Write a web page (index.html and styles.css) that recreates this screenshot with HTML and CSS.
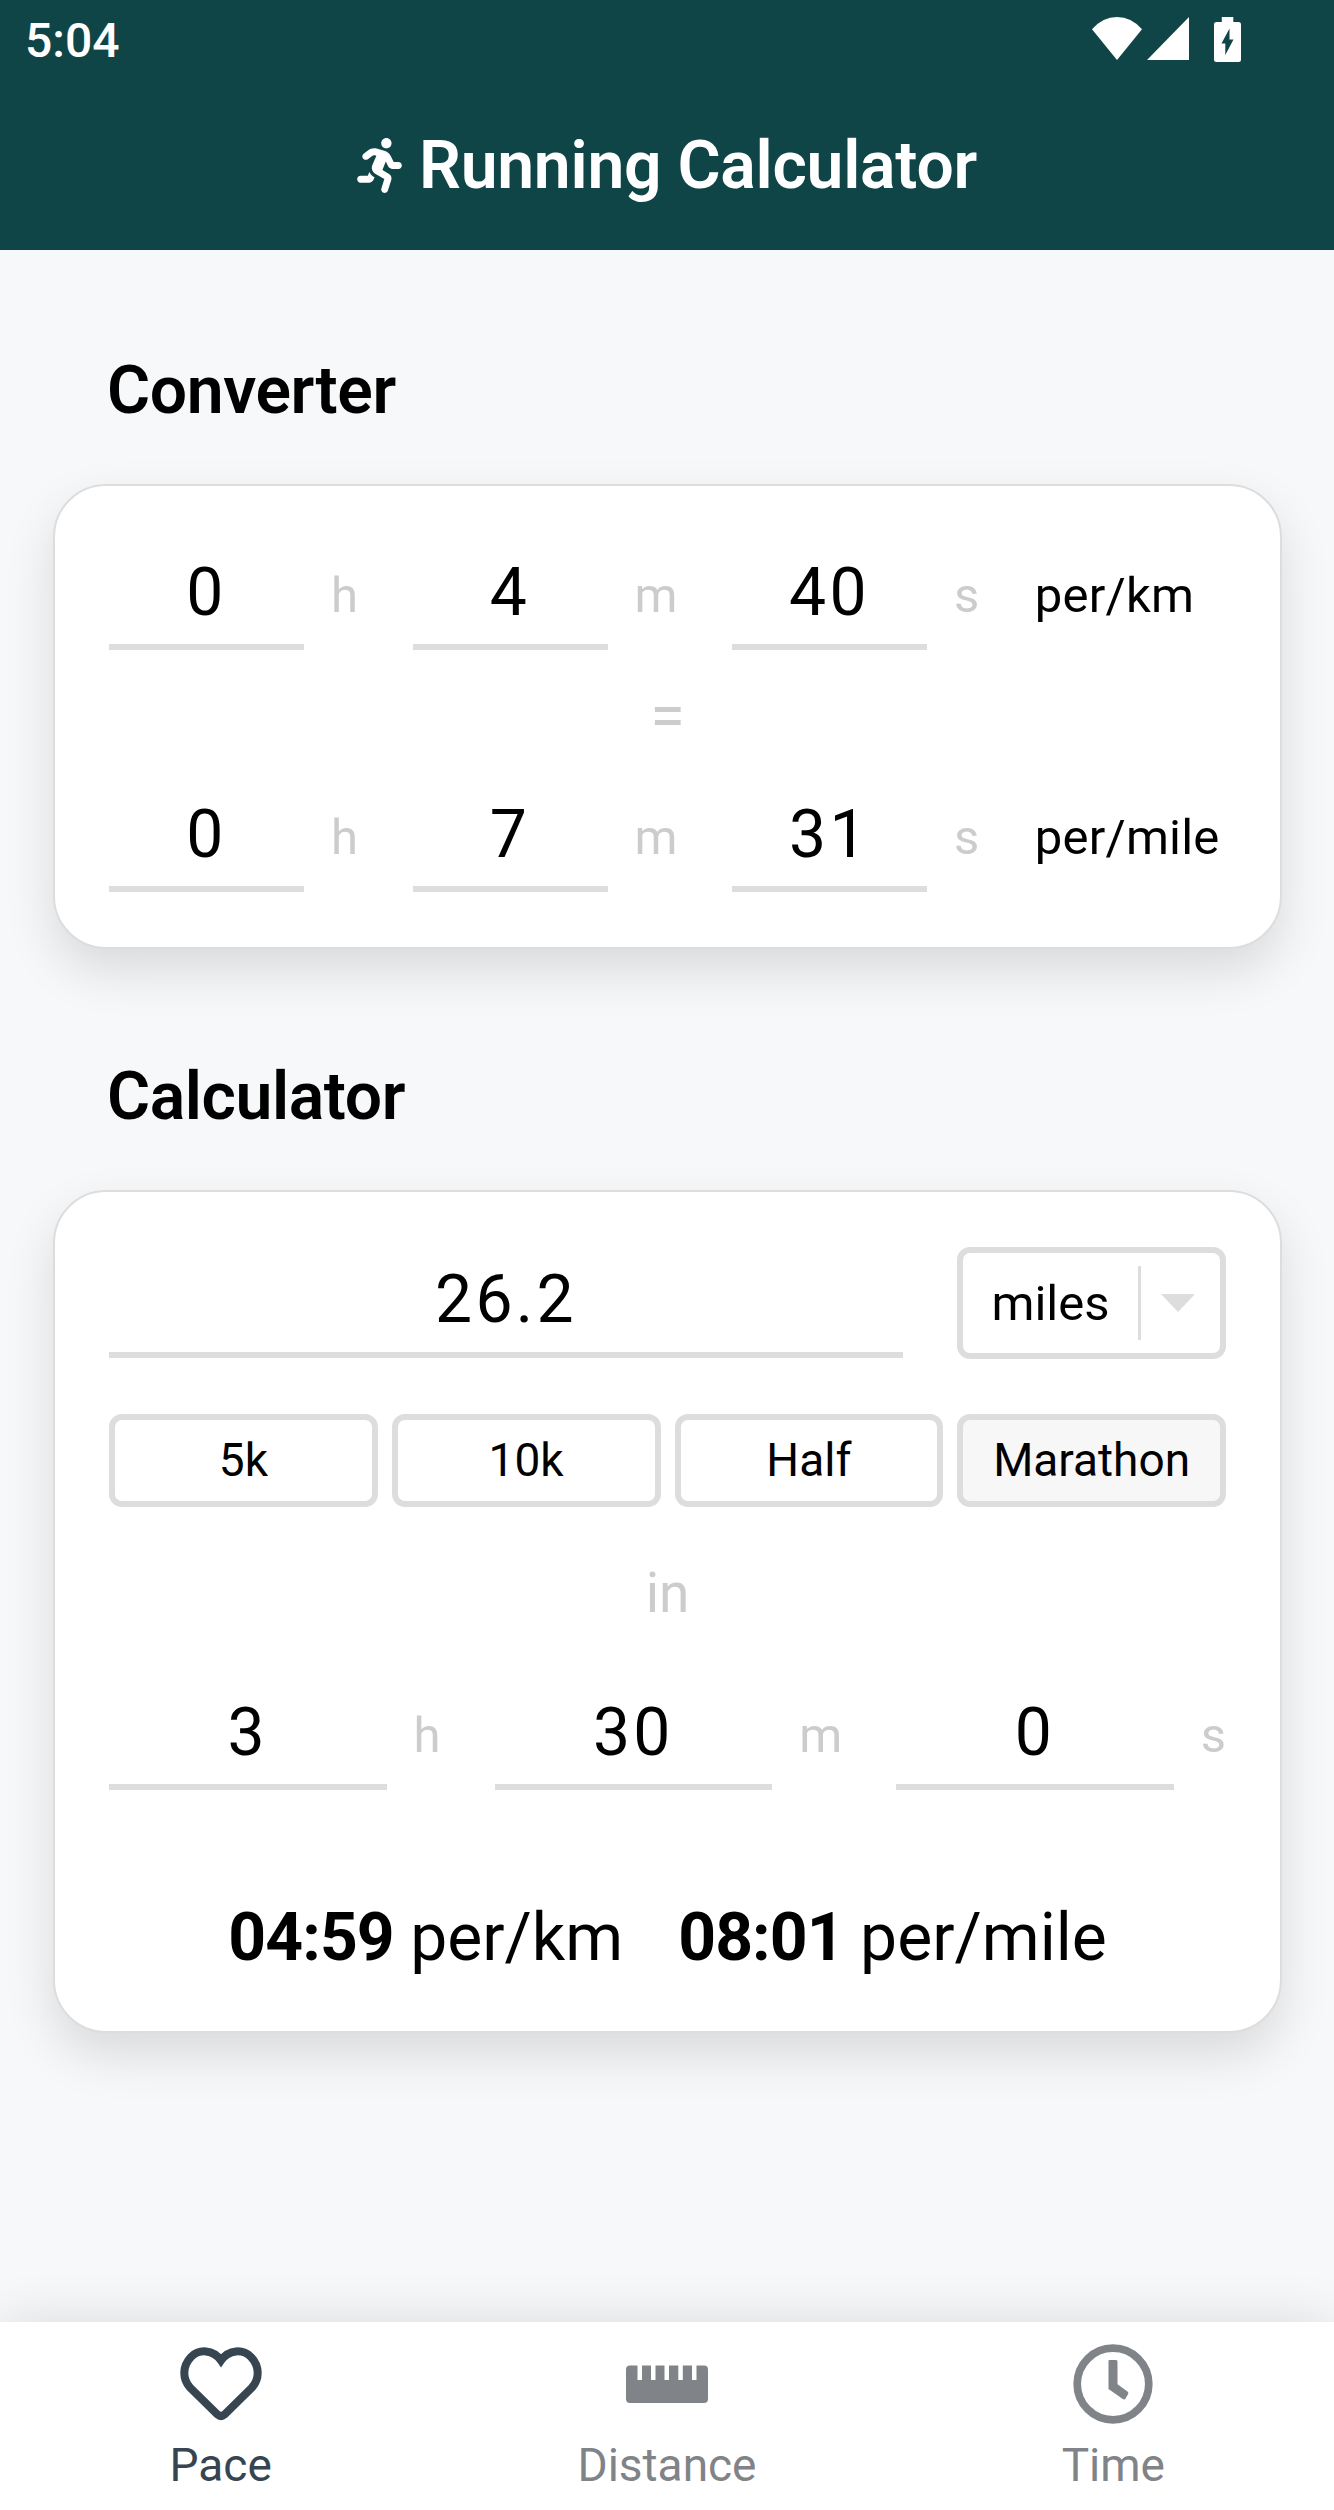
FILE: index.html
```html
<!DOCTYPE html>
<html lang="en">
<head>
<meta charset="utf-8">
<title>Running Calculator</title>
<link rel="stylesheet" href="styles.css">
</head>
<body>
<div class="app">
  <header class="header">
    <div class="status">
      <span class="clock">5:04</span>
      <div class="status-icons">
        <svg class="wifi" width="50" height="43" viewBox="0 0 50 43"><path d="M0 12.3Q10.500 0 25 0T50 12.300L25 43Z"/></svg>
        <svg class="signal" width="42" height="43" viewBox="0 0 42 43"><path d="M42 0V43H0Z"/></svg>
        <svg class="battery" width="27" height="45" viewBox="0 0 27 45"><path fill-rule="evenodd" d="M7.800 0H19.300V5H24.500Q27 5 27 7.500V42.500Q27 45 24.500 45H2.500Q0 45 0 42.500V7.500Q0 5 2.500 5H7.800ZM15.500 11.500L7.500 26.500H11.300V38L19.500 22.500H15.500Z"/></svg>
      </div>
    </div>
    <div class="title-bar">
      <svg class="runner" width="45" height="55" viewBox="0 0 416 512"><path d="M272 96c26.510 0 48-21.490 48-48S298.510 0 272 0s-48 21.490-48 48 21.490 48 48 48zM113.690 317.470l-14.800 34.520H32c-17.670 0-32 14.330-32 32s14.330 32 32 32h77.450c19.250 0 36.580-11.440 44.110-29.090l8.790-20.520-10.670-6.300c-17.320-10.230-30.060-25.370-37.990-42.610zM384 223.990h-44.030l-26.060-53.250c-12.500-25.550-35.450-44.230-61.780-50.940l-71.080-21.140c-28.300-6.800-57.770-.55-80.840 17.140l-39.670 30.410c-14.030 10.750-16.690 30.830-5.940 44.860s30.840 16.660 44.860 5.920l39.690-30.410c7.670-5.890 17.440-8 25.270-6.140l14.700 4.370-37.460 87.390c-12.620 29.480-1.310 64.010 26.300 80.310l84.980 50.170-27.470 87.730c-5.280 16.860 4.110 34.820 20.970 40.090 3.190 1 6.410 1.480 9.580 1.480 13.610 0 26.230-8.770 30.520-22.450l31.640-101.060c5.910-20.770-2.890-43.080-21.640-54.390l-61.240-36.140 31.310-78.280 20.270 41.430c8 16.340 24.920 26.890 43.110 26.890H384c17.670 0 32-14.330 32-32s-14.330-31.990-32-31.990z"/></svg>
      <h1>Running Calculator</h1>
    </div>
  </header>

  <main class="content">
    <h2>Converter</h2>
    <section class="card converter">
      <div class="row">
        <div class="field">0</div><span class="unit">h</span>
        <div class="field">4</div><span class="unit">m</span>
        <div class="field">40</div><span class="unit">s</span>
        <span class="pace-unit">per/km</span>
      </div>
      <div class="equals">=</div>
      <div class="row">
        <div class="field">0</div><span class="unit">h</span>
        <div class="field">7</div><span class="unit">m</span>
        <div class="field">31</div><span class="unit">s</span>
        <span class="pace-unit">per/mile</span>
      </div>
    </section>

    <h2>Calculator</h2>
    <section class="card calculator">
      <div class="distance">
        <div class="field">26.2</div>
        <div class="select">
          <span class="select-value">miles</span>
          <span class="select-arrow"><svg width="34" height="18" viewBox="0 0 34 18"><path d="M0 0H34L17 18Z"/></svg></span>
        </div>
      </div>
      <div class="presets">
        <div class="preset">5k</div>
        <div class="preset">10k</div>
        <div class="preset">Half</div>
        <div class="preset active">Marathon</div>
      </div>
      <div class="in">in</div>
      <div class="row">
        <div class="field">3</div><span class="unit">h</span>
        <div class="field">30</div><span class="unit">m</span>
        <div class="field">0</div><span class="unit">s</span>
      </div>
      <div class="result">
        <span><b>04:59</b> per/km</span>
        <span><b>08:01</b> per/mile</span>
      </div>
    </section>
  </main>

  <nav class="tabs">
    <div class="tab selected">
      <svg width="84" height="80" viewBox="0 0 84 80"><path d="M42 16.500C34 5 20 5 12 13C3 22.500 3.500 35 11 43.500L38.500 70.500Q42 73.500 45.500 70.500L73 43.500C80.500 35 81 22.500 72 13C64 5 50 5 42 16.500Z" fill="none" stroke="currentColor" stroke-width="8"/></svg>
      <span>Pace</span>
    </div>
    <div class="tab">
      <svg width="82" height="80" viewBox="0 0 82 80"><path fill="currentColor" d="M4 21.500H11.500V36H16V21.500H25V36H29.500V21.500H38.500V36H43V21.500H52.300V36H56.800V21.500H66V36H70.500V21.500H78Q82 21.500 82 25.500V55Q82 59 78 59H4Q0 59 0 55V25.500Q0 21.500 4 21.500Z"/></svg>
      <span>Distance</span>
    </div>
    <div class="tab">
      <svg width="80" height="80" viewBox="0 0 80 80"><circle cx="40" cy="40" r="35.800" fill="none" stroke="currentColor" stroke-width="7.700"/><path fill="currentColor" d="M36.500 16H43Q44.500 16 44.500 17.500V40.300L54.500 47.500Q56 48.800 55 50.300L52.500 54.500Q51.300 56 49.800 55L35.500 45V17Q35.500 16 36.500 16Z"/></svg>
      <span>Time</span>
    </div>
  </nav>
</div>
</body>
</html>
```

FILE: styles.css
```css
* {
  box-sizing: border-box;
}

body {
  margin: 0;
  background: #f7f8fa;
  color: #000;
  font-family: Roboto, "Liberation Sans", sans-serif;
}

svg {
  display: block;
  flex: none;
}

.app {
  display: flex;
  flex-direction: column;
  width: 1334px;
  height: 2510px;
  overflow: hidden;
}

.header {
  height: 250px;
  background: #104547;
  color: #fff;
  fill: #fff;
}

.status {
  display: flex;
  justify-content: space-between;
  height: 82px;
  padding: 0 93px 0 25px;
}

.clock {
  font-size: 48px;
  font-weight: 500;
  line-height: 82px;
}

.status-icons {
  display: flex;
  padding-top: 16.500px;
}

.signal {
  margin-left: 5px;
}

.battery {
  margin-left: 25px;
}

.title-bar {
  display: flex;
  align-items: center;
  justify-content: center;
  gap: 17px;
  height: 167px;
}

h1,
h2 {
  margin: 0;
  font-size: 66px;
  font-weight: 600;
  letter-spacing: -0.400px;
  line-height: 80px;
}

h1 {
  letter-spacing: -0.250px;
}

.content {
  flex: 1;
  padding: 101px 52px 0 53px;
}

h2 {
  margin: 0 54px 53px;
}

.card {
  padding: 54px;
  border: 2px solid #ddd;
  border-radius: 53px;
  background: #fff;
  box-shadow: 0 22px 50px rgba(0, 0, 0, 0.12);
}

.converter {
  height: 465px;
  margin-bottom: 108px;
}

.calculator {
  height: 843px;
  padding-top: 55px;
}

.row {
  display: flex;
  align-items: center;
  height: 110px;
}

.field {
  flex: 1;
  height: 110px;
  border-bottom: 6px solid #ddd;
  font-size: 66px;
  letter-spacing: 3.300px;
  line-height: 105px;
  text-align: center;
}

.converter .field {
  flex: 0 0 195px;
}

.unit {
  margin: 0 54px 0 27px;
  color: #ccc;
  font-size: 49px;
}

.converter .unit {
  margin-right: 54.500px;
}

.calculator .unit:last-child {
  margin-right: 0;
}

.pace-unit {
  margin-left: 1px;
  font-size: 49px;
  letter-spacing: 0.200px;
}

.equals,
.in {
  color: #ccc;
  font-size: 63px;
  line-height: 132px;
  text-align: center;
}

.distance {
  display: flex;
  gap: 54px;
  height: 112px;
  margin-bottom: 55px;
}

.distance .field {
  height: 111px;
}

.select {
  display: flex;
  align-items: center;
  width: 269px;
  border: 6px solid #ddd;
  border-radius: 13px;
}

.select-value {
  width: 175px;
  font-size: 49px;
  text-align: center;
}

.select-arrow {
  display: flex;
  flex: 1;
  align-items: center;
  justify-content: center;
  height: 74px;
  padding-right: 5px;
  border-left: 3px solid #ddd;
  fill: #ddd;
}

.presets {
  display: grid;
  grid-template-columns: repeat(4, 1fr);
  gap: 14px;
}

.preset {
  height: 93px;
  border: 6px solid #ddd;
  border-radius: 13px;
  font-size: 46px;
  line-height: 81px;
  text-align: center;
}

.preset.active {
  background: #f7f7f7;
}

.in {
  font-size: 55px;
  line-height: 173px;
}

.result {
  display: flex;
  justify-content: center;
  gap: 55px;
  margin-top: 109px;
  font-size: 66px;
  line-height: 78px;
}

.result b {
  letter-spacing: -0.900px;
}

.tabs {
  display: grid;
  grid-template-columns: repeat(3, 1fr);
  gap: 5px;
  height: 188px;
  padding-top: 22px;
  background: #fff;
  box-shadow: 0 0 50px rgba(0, 0, 0, 0.12);
}

.tab {
  display: flex;
  flex-direction: column;
  align-items: center;
  gap: 14px;
  color: #808488;
  font-size: 46px;
  line-height: 54px;
}

.tab.selected {
  color: #36454f;
}
```
